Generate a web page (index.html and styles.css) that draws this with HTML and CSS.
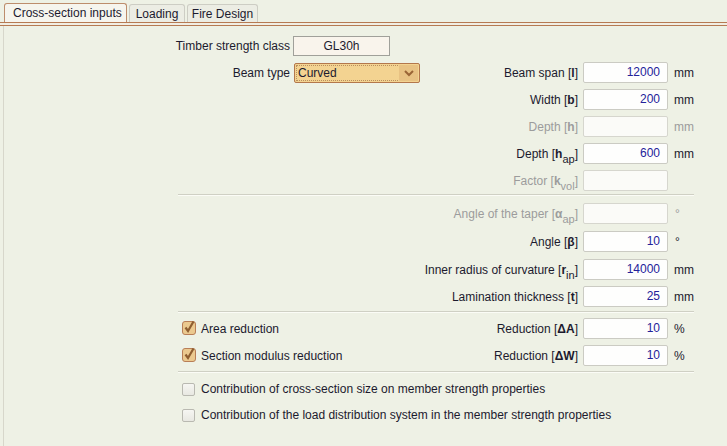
FILE: index.html
```html
<!DOCTYPE html>
<html>
<head>
<meta charset="utf-8">
<link rel="stylesheet" href="styles.css">
</head>
<body>
<div class="tabs">
  <div class="tab active">Cross-section inputs</div>
  <div class="tab t-loading">Loading</div>
  <div class="tab t-fire">Fire Design</div>
</div>
<div class="tabline"></div>
<div class="panel">
  <div class="form">
    <div class="row r-first">
      <span class="llabel">Timber strength class</span>
      <div class="classbox">GL30h</div>
    </div>
    <div class="row">
      <span class="llabel">Beam type</span>
      <div class="select">
        <span class="select-text">Curved</span>
        <span class="select-btn"><svg width="12" height="8" viewBox="0 0 12 8"><polyline points="2,2 6,6 10,2" fill="none" stroke="#9a6536" stroke-width="2"/></svg></span>
      </div>
      <span class="label">Beam span [<b>l</b>]</span>
      <div class="input">12000</div>
      <span class="unit">mm</span>
    </div>
    <div class="row">
      <span class="label">Width [<b>b</b>]</span>
      <div class="input">200</div>
      <span class="unit">mm</span>
    </div>
    <div class="row dis">
      <span class="label">Depth [<b>h</b>]</span>
      <div class="input"></div>
      <span class="unit">mm</span>
    </div>
    <div class="row">
      <span class="label">Depth [<b>h</b><sub>ap</sub>]</span>
      <div class="input">600</div>
      <span class="unit">mm</span>
    </div>
    <div class="row dis">
      <span class="label">Factor [<b>k</b><sub>vol</sub>]</span>
      <div class="input"></div>
    </div>
    <div class="sep s1"></div>
    <div class="row r2 r2-first dis">
      <span class="label">Angle of the taper [<b>α</b><sub>ap</sub>]</span>
      <div class="input"></div>
      <span class="unit deg">°</span>
    </div>
    <div class="row r2">
      <span class="label">Angle [<b>β</b>]</span>
      <div class="input">10</div>
      <span class="unit deg">°</span>
    </div>
    <div class="row r2">
      <span class="label">Inner radius of curvature [<b>r</b><sub>in</sub>]</span>
      <div class="input">14000</div>
      <span class="unit">mm</span>
    </div>
    <div class="row r2 r2-last">
      <span class="label">Lamination thickness [<b>t</b>]</span>
      <div class="input">25</div>
      <span class="unit">mm</span>
    </div>
    <div class="sep s2"></div>
    <div class="row r3-first">
      <label class="check"><span class="cb on"><svg width="15" height="15" viewBox="0 0 15 15"><rect x="0.5" y="1.5" width="13" height="13" rx="2.5" fill="#ebc98f" stroke="#b87e57"/><path d="M3.5 7.5 L6 11 L11.5 1.5" fill="none" stroke="#8e5e30" stroke-width="2.2"/></svg></span>Area reduction</label>
      <span class="label">Reduction [<b>ΔA</b>]</span>
      <div class="input">10</div>
      <span class="unit">%</span>
    </div>
    <div class="row">
      <label class="check"><span class="cb on"><svg width="15" height="15" viewBox="0 0 15 15"><rect x="0.5" y="1.5" width="13" height="13" rx="2.5" fill="#ebc98f" stroke="#b87e57"/><path d="M3.5 7.5 L6 11 L11.5 1.5" fill="none" stroke="#8e5e30" stroke-width="2.2"/></svg></span>Section modulus reduction</label>
      <span class="label">Reduction [<b>ΔW</b>]</span>
      <div class="input">10</div>
      <span class="unit">%</span>
    </div>
    <div class="sep s3"></div>
    <div class="crow c-first">
      <label class="check"><span class="cb off"></span>Contribution of cross-section size on member strength properties</label>
    </div>
    <div class="crow">
      <label class="check"><span class="cb off"></span>Contribution of the load distribution system in the member strength properties</label>
    </div>
  </div>
</div>
</body>
</html>
```
FILE: styles.css
```css
* { box-sizing: border-box; }
html, body {
  margin: 0;
  padding: 0;
  height: 100%;
  background: #eef1e5;
  font-family: "Liberation Sans", Arial, sans-serif;
  font-size: 12px;
  color: #1c1a2e;
  overflow: hidden;
}
.tabs {
  display: flex;
  align-items: flex-end;
  gap: 2px;
  padding: 3px 0 0 4px;
  height: 22px;
}
.tab {
  height: 18px;
  border: 1px solid #cdcdc4;
  border-bottom: none;
  border-radius: 3px 3px 0 0;
  background: #ecede4;
  display: flex;
  align-items: center;
  justify-content: center;
  color: #1c1a2e;
}
.tab.active {
  height: 19px;
  width: 123px;
  background: #f6f5ee;
  border-color: #bd8d6c;
  justify-content: flex-start;
  padding-left: 8px;
}
.t-loading { width: 56px; }
.t-fire { width: 71px; }
.tabline {
  height: 4px;
  background: linear-gradient(to bottom, #b67a52 0 1px, #f1eee3 1px 3px, #b67a52 3px 4px);
}
.panel {
  border-left: 1px solid #d7d7cb;
  margin-left: 3px;
  height: calc(100% - 26px);
  padding-top: 10px;
}
.form {
  margin-left: 174px;
  width: 516px;
}
.row {
  display: grid;
  grid-template-columns: 115px 130px 160px 85px 26px;
  height: 21px;
  margin-top: 6px;
  align-items: center;
}
.row.r-first { margin-top: 0; height: 20px; }
.row.r2 { margin-top: 7px; }
.row.r2-first { margin-top: 7px; }
.row.r2-last { margin-top: 6px; }
.row.r3-first { margin-top: 5px; }
.llabel {
  grid-column: 1;
  justify-self: end;
  white-space: nowrap;
  padding-right: 3px;
}
.label {
  grid-column: 3;
  justify-self: end;
  white-space: nowrap;
  padding-right: 5px;
}
.label b { font-weight: bold; }
sub {
  font-size: 11px;
  vertical-align: -5px;
  line-height: 0;
}
.dis .label, .dis .unit { color: #9c9c9c; }
.dis .label b { color: #9c9c9c; }
.input {
  grid-column: 4;
  height: 21px;
  border: 1px solid #cbcbc3;
  border-radius: 2px;
  background: #fefefd;
  color: #24229a;
  text-align: right;
  padding-right: 7px;
  line-height: 19px;
}
.dis .input { border-color: #d6d6ce; background: #fbfbf8; }
.unit {
  grid-column: 5;
  padding-left: 6px;
  white-space: nowrap;
}
.unit.deg { padding-left: 7px; }
.classbox {
  grid-column: 2;
  width: 97px;
  height: 20px;
  border: 1px solid #a0a09a;
  background: #f9f4ec;
  text-align: center;
  line-height: 18px;
}
.select {
  grid-column: 2;
  width: 126px;
  height: 20px;
  margin-left: 1px;
  border: 1px solid #b3774c;
  border-radius: 2px;
  background: #f3d391;
  display: flex;
  padding: 1px;
}
.select-text {
  flex: 1;
  border: 1px dotted #b98e5e;
  line-height: 14px;
  padding-left: 1px;
  color: #1c1a2e;
}
.select-btn {
  width: 19px;
  background: #e8c283;
  display: flex;
  align-items: center;
  justify-content: center;
  margin-left: -1px;
}
.sep {
  height: 2px;
  border-top: 1px solid #cfd0c4;
  border-bottom: 1px solid #fbfcf6;
}
.s1 { margin-top: 3px; }
.s2 { margin-top: 4px; }
.s3 { margin-top: 5px; }
.check {
  grid-column: 1 / 3;
  display: flex;
  align-items: center;
  white-space: nowrap;
  padding-left: 4px;
}
.cb {
  display: inline-block;
  width: 15px;
  height: 15px;
  margin-right: 4px;
}
.cb.on { margin-top: -2px; }
.cb.off {
  width: 13px;
  height: 13px;
  margin-right: 6px;
  border: 1px solid #b9b9b1;
  border-radius: 2px;
  background: linear-gradient(#f6f6f2, #e8e8e2);
}
.crow {
  height: 20px;
  display: flex;
  align-items: center;
  margin-top: 6px;
}
.crow.c-first { margin-top: 6px; }
```
